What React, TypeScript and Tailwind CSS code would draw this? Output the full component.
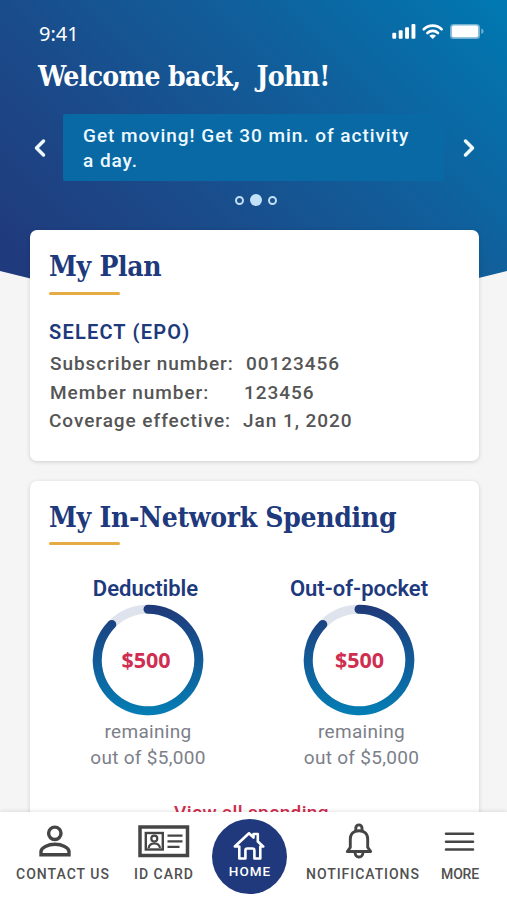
import { ReactNode } from "react";
import { ChevronLeft, ChevronRight } from "lucide-react";

const planRows = [
  { label: "Subscriber number:", value: "00123456", row: "pl-px", gap: "w-[196px]" },
  { label: "Member number:", value: "123456", row: "pl-px", gap: "w-[194px]" },
  { label: "Coverage effective:", value: "Jan 1, 2020", row: "pl-0", gap: "w-[194px]" },
];

const StatusBar = () => (
  <div className="flex h-[46px] items-start justify-between pl-[39px] pr-[23px] pt-[22px] text-white">
    <span className="font-['Noto_Sans'] text-[20px] leading-[24px]">9:41</span>
    <svg width="92" height="18" viewBox="392 22 92 18" fill="currentColor">
      <rect x="392.3" y="32.7" width="3.9" height="6.1" rx="1" />
      <rect x="398.7" y="30.3" width="3.9" height="8.5" rx="1" />
      <rect x="405.1" y="27.2" width="3.9" height="11.6" rx="1" />
      <rect x="411.5" y="24" width="3.9" height="14.8" rx="1" />
      <path d="M423.8 29.3c5-4.8 12.8-4.8 17.8 0" fill="none" stroke="currentColor" strokeWidth="2.7" strokeLinecap="round" />
      <path d="M427.4 33c3-2.8 7.6-2.8 10.6 0" fill="none" stroke="currentColor" strokeWidth="2.6" strokeLinecap="round" />
      <path d="M429.4 35.8c1.9-1.6 4.7-1.6 6.6 0l-3.3 3.2z" />
      <rect x="450" y="24" width="30" height="15" rx="3.5" opacity=".45" />
      <rect x="451.8" y="25.6" width="26.4" height="11.6" rx="2" />
      <path d="M481.3 28.5c3 1 3 4.500 0 5.500z" opacity=".45" />
    </svg>
  </div>
);

const Title = ({ children }: { children: ReactNode }) => (
  <h2 className="whitespace-nowrap font-['DejaVu_Serif_Condensed','DejaVu_Serif',serif] text-[28px] font-bold leading-[36px] tracking-[-0.3px] text-[#20397c]">
    {children}
  </h2>
);

type GaugeProps = { id: string; label: string; className?: string; labelClass?: string; amountClass?: string; noteClass?: string };

const Gauge = ({ id, label, className = "", labelClass = "", amountClass = "", noteClass = "" }: GaugeProps) => (
  <div className={`flex w-[150px] flex-col items-center ${className}`}>
    <h3 className={`whitespace-nowrap text-[22px] font-semibold leading-[26px] text-[#20397c] ${labelClass}`}>{label}</h3>
    <div className="mt-[2px] grid place-items-center">
      <svg width="112" height="112" viewBox="0 0 112 112" className="col-start-1 row-start-1">
        <defs>
          <linearGradient id={id} gradientUnits="userSpaceOnUse" x1="0" y1="0" x2="0" y2="112">
            <stop offset="0" stopColor="#203878" />
            <stop offset=".5" stopColor="#125b98" />
            <stop offset="1" stopColor="#037fb5" />
          </linearGradient>
        </defs>
        <circle cx="56" cy="56" r="50.8" fill="none" stroke="#dfe3ed" strokeWidth="9" />
        <path d="M56 5.2A50.8 50.8 0 1 1 19.8 20.4" fill="none" stroke={`url(#${id})`} strokeWidth="9" strokeLinecap="round" />
      </svg>
      <span className={`col-start-1 row-start-1 font-['Noto_Sans'] text-[21.5px] font-bold text-[#d02e50] ${amountClass}`}>$500</span>
    </div>
    <p className={`mt-[3px] whitespace-nowrap text-center text-[19px] leading-[26px] tracking-[0.3px] text-[#7c7f89] ${noteClass}`}>
      remaining
      <br />
      out of $5,000
    </p>
  </div>
);

const ContactIcon = () => (
  <svg width="32" height="33" viewBox="39 825 32 33" fill="none" stroke="#454545" strokeWidth="3.4">
    <circle cx="54.8" cy="833.3" r="6.2" />
    <path d="M41 854.8v-3.3c0-4 7-7.2 14-7.2s14 3.2 14 7.2v3.3z" />
  </svg>
);

const IdCardIcon = () => (
  <svg width="52" height="33" viewBox="137 825 52 33" fill="none" stroke="#454545" className="mr-px">
    <rect x="139" y="827" width="47.5" height="28.5" strokeWidth="3.5" />
    <rect x="144.8" y="833" width="17" height="16.5" strokeWidth="2.4" />
    <circle cx="153.3" cy="838.6" r="3" strokeWidth="2.2" />
    <path d="M147.6 848c1-6 10.4-6 11.4 0" strokeWidth="2.2" />
    <path d="M166.5 835.7h15M166.5 841.3h15M166.5 846.9h12" strokeWidth="2.3" />
  </svg>
);

const BellIcon = () => (
  <svg width="30" height="36" viewBox="344 823 30 36" fill="none" stroke="#454545" strokeWidth="2.9" strokeLinejoin="round" strokeLinecap="round" className="mr-[8px]">
    <path d="M355.8 830.5v-2.5a3.1 3.1 0 0 1 6.2 0v2.5" />
    <path d="M347.3 851.5h23.4l-3-4.2v-8.3c0-5.500-3.500-8.300-8.700-8.300s-8.700 2.800-8.700 8.300v8.300z" />
    <path d="M355 852.500c.5 6 7.500 6 8 0" />
  </svg>
);

const HomeIcon = () => (
  <svg width="32" height="29" viewBox="233.500 831 32 29" fill="none" stroke="currentColor" strokeWidth="2.6" strokeLinejoin="round" className="mr-px">
    <path d="M235.300 846.500l14.200-13.200 4.500 4.200v-3.500h4.300v7.500l5.400 5h-2.900v12h-5.900v-8q0-2-2-2h-5q-2 0-2 2v8h-6.100v-12z" />
  </svg>
);

const App = () => {
  return (
    <div className="flex h-[900px] w-[507px] flex-col overflow-hidden bg-[#f5f5f5] font-['Roboto',sans-serif]">
      <div className="h-[812px] overflow-hidden">
        <header className="h-[300px] bg-[linear-gradient(45deg,#203b7d_8%,#1a4c8b_37%,#0f619d_68%,#0079b2_100%)] [clip-path:polygon(0_0,100%_0,100%_271px,94%_278.5px,6%_278.5px,0_271px)]">
          <StatusBar />
          <h1 className="whitespace-pre pl-[38px] pt-[13px] font-['DejaVu_Serif_Condensed','DejaVu_Serif',serif] text-[28px] font-bold leading-[36px] tracking-[-0.65px] text-white">
            Welcome back,&nbsp; John!
          </h1>
          <div className="mt-[19px] flex h-[67px] items-center text-[#eef9ff]">
            <div className="flex w-[63px] justify-center pl-[16px]">
              <ChevronLeft size={28} strokeWidth={3} />
            </div>
            <p className="h-[67px] w-[381px] rounded-[2px] bg-[#0869a5] pl-5 pt-[9px] text-[19px] font-medium leading-[25px] tracking-[0.96px]">
              Get moving! Get 30 min. of activity
              <br />a day.
            </p>
            <div className="flex flex-1 justify-center pr-[13px]">
              <ChevronRight size={28} strokeWidth={3} />
            </div>
          </div>
          <div className="mt-[13px] flex items-center justify-center gap-[6px] pl-[4px]">
            <span className="size-[9px] rounded-full border-2 border-[#c2def5]" />
            <span className="size-[12px] rounded-full bg-[#c2e0f7]" />
            <span className="size-[9px] rounded-full border-2 border-[#c2def5]" />
          </div>
        </header>

        <main className="relative -mt-[70px] pl-[30px] pr-[28px]">
          <section className="h-[231px] rounded-[7px] bg-white pl-[19px] pt-[19px] shadow-[0_1px_4px_rgba(0,0,0,0.16)]">
            <Title>My Plan</Title>
            <div className="mt-[7px] h-[3px] w-[71px] rounded-sm bg-[#e5ab44]" />
            <h3 className="mt-[24px] text-[20px] font-semibold leading-[26px] tracking-[1.2px] text-[#20397c]">SELECT (EPO)</h3>
            <div className="mt-[5px] text-[19px] font-medium leading-[28.5px] tracking-[0.95px] text-[#555]">
              {planRows.map((row) => (
                <div key={row.label} className={`flex whitespace-nowrap ${row.row}`}>
                  <span className={`shrink-0 ${row.gap}`}>{row.label}</span>
                  <span>{row.value}</span>
                </div>
              ))}
            </div>
          </section>

          <section className="mt-[20px] h-[360px] rounded-[7px] bg-white pt-[19px] shadow-[0_1px_4px_rgba(0,0,0,0.16)]">
            <div className="pl-[19px]">
              <Title>My In-Network Spending</Title>
              <div className="mt-[6px] h-[3px] w-[71px] rounded-sm bg-[#e5ab44]" />
            </div>
            <div className="flex pl-[43px] pt-[31px]">
              <Gauge id="deductible" label="Deductible" labelClass="pr-[5px]" amountClass="pr-[4px]" />
              <Gauge id="pocket" label="Out-of-pocket" className="ml-[61px]" noteClass="pl-[5px]" amountClass="pl-px" />
            </div>
            <p className="mt-[29px] pr-[6px] text-center text-[19px] font-medium leading-[26px] tracking-[0.35px] text-[#d02e50]">
              View all spending
            </p>
          </section>
        </main>
      </div>

      <nav className="relative flex h-[88px] bg-white text-[14px] font-medium leading-[18px] tracking-[1px] text-[#505050] shadow-[0_-1px_4px_rgba(0,0,0,0.10)]">
        <div className="flex w-[126px] flex-col items-center whitespace-nowrap pt-[13px]">
          <div className="mr-[16px]"><ContactIcon /></div>
          <span className="mt-[7px]">CONTACT US</span>
        </div>
        <div className="flex w-[76px] flex-col items-center whitespace-nowrap pt-[13px]">
          <IdCardIcon />
          <span className="mt-[7px]">ID CARD</span>
        </div>
        <div className="ml-[10px] mt-[7px] flex size-[75px] flex-col items-center rounded-full bg-[#20397d] pt-[12px] text-white">
          <HomeIcon />
          <span className="mt-[2px] pl-px text-[13.5px]">HOME</span>
        </div>
        <div className="flex w-[152px] flex-col items-center whitespace-nowrap pt-[11px]">
          <BellIcon />
          <span className="mt-[6px] tracking-[0.95px]">NOTIFICATIONS</span>
        </div>
        <div className="flex w-[42px] flex-col items-center pt-[13px] tracking-[-0.2px]">
          <svg width="32" height="33" viewBox="444 825 32 33" stroke="#454545" strokeWidth="2.6" strokeLinecap="round">
            <path d="M446 833.7h27M446 841.8h27M446 849.5h27" />
          </svg>
          <span className="mt-[7px]">MORE</span>
        </div>
      </nav>
    </div>
  );
};

export default App;
